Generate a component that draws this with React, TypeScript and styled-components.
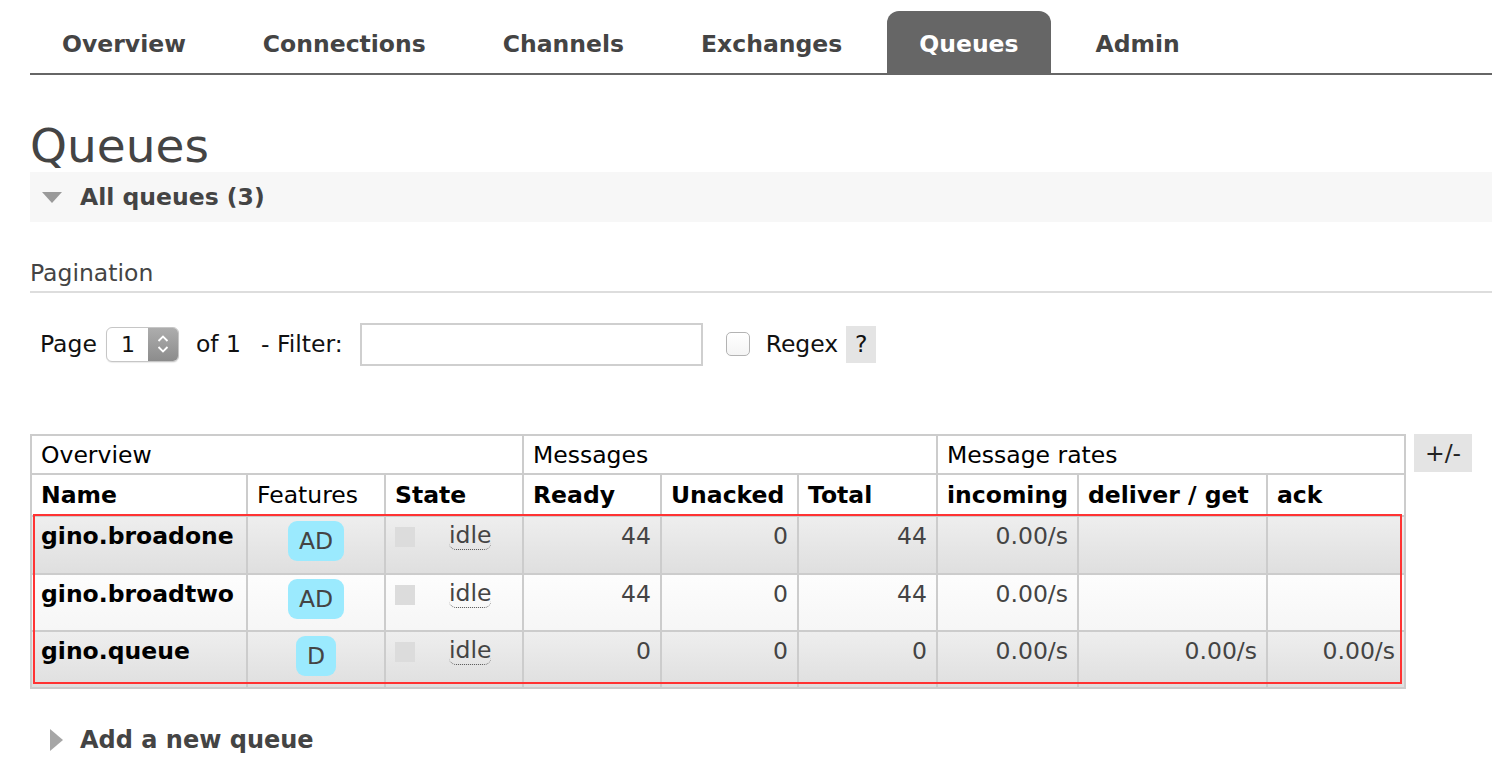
import React from 'react';
import styled, { createGlobalStyle } from 'styled-components';

const GlobalStyle = createGlobalStyle`
  html, body { margin: 0; padding: 0; background: #fff; }
  body {
    font-family: "DejaVu Sans", Verdana, sans-serif;
    font-size: 23.5px;
    color: #000;
    overflow: hidden;
  }
  * { box-sizing: border-box; }
`;

const Page = styled.div`
  padding-left: 30px;
  width: 1492px;
`;

const Nav = styled.nav`
  display: flex;
  align-items: flex-end;
  gap: 13px;
  height: 75px;
  border-bottom: 2px solid #666;
`;

const Tab = styled.a<{ $active?: boolean }>`
  display: flex;
  align-items: center;
  height: 62px;
  padding: 4px 32px 0;
  font-weight: bold;
  font-size: 23.5px;
  color: ${(p) => (p.$active ? '#fff' : '#444')};
  background: ${(p) => (p.$active ? '#666' : 'transparent')};
  border-radius: 12px 12px 0 0;
  text-decoration: none;
  white-space: nowrap;
`;

const Title = styled.h1`
  margin: 45px 0 0;
  font-size: 47px;
  font-weight: normal;
  line-height: 52px;
  color: #444;
`;

const SectionBar = styled.div`
  display: flex;
  align-items: center;
  gap: 18px;
  height: 50px;
  background: #f7f7f7;
  padding-left: 12px;
  font-weight: bold;
  color: #444;
`;

const SubHeading = styled.h3`
  margin: 36px 0 0;
  font-size: 23.5px;
  font-weight: normal;
  color: #444;
  line-height: 30px;
  padding-bottom: 3px;
  border-bottom: 2px solid #ddd;
`;

const PagingRow = styled.div`
  display: flex;
  align-items: center;
  height: 44px;
  margin-top: 29px;
  padding-left: 10px;
  color: #111;
`;

const Label = styled.span<{ $ml?: number }>`
  margin-left: ${(p) => p.$ml ?? 0}px;
  white-space: nowrap;
`;

const Select = styled.div`
  display: flex;
  margin-left: 9px;
  width: 73px;
  height: 35px;
  border: 1px solid #c6c6c6;
  border-radius: 6px;
  background: #fff;
  box-shadow: 0 1px 1px rgba(0, 0, 0, 0.08);
  overflow: hidden;
`;

const SelectValue = styled.div`
  flex: 1;
  display: flex;
  align-items: center;
  padding-left: 14px;
  font-size: 22px;
`;

const Stepper = styled.div`
  width: 30px;
  display: flex;
  align-items: center;
  justify-content: center;
  background: linear-gradient(#adadad, #8c8c8c);
`;

const FilterInput = styled.input`
  margin-left: 17px;
  width: 343px;
  height: 43px;
  border: 2px solid #cfcfcf;
  background: #fff;
  outline: none;
  font: inherit;
`;

const Checkbox = styled.span`
  margin-left: 23px;
  width: 24px;
  height: 24px;
  border: 1.5px solid #b3b3b3;
  border-radius: 5px;
  background: linear-gradient(#fff, #f4f4f4);
`;

const HelpBox = styled.span`
  margin-left: 8px;
  width: 30px;
  height: 37px;
  display: flex;
  align-items: center;
  justify-content: center;
  background: #e4e4e4;
`;

const TableArea = styled.div`
  position: relative;
  display: flex;
  align-items: flex-start;
  gap: 8px;
  margin-top: 68px;
`;

const Table = styled.table`
  border-collapse: collapse;
  table-layout: fixed;
  width: 1376px;
  border: 2px solid #ccc;
`;

const Col = styled.col<{ $w: number }>`
  width: ${(p) => p.$w}px;
`;

const GroupRow = styled.tr`
  height: 39px;
`;

const SubRow = styled.tr`
  height: 42px;
`;

const DataRow = styled.tr<{ $h: number }>`
  height: ${(p) => p.$h}px;
`;

const Th = styled.th<{ $bold?: boolean }>`
  border: 2px solid #ccc;
  padding: 0 9px;
  text-align: left;
  vertical-align: middle;
  font-weight: ${(p) => (p.$bold ? 'bold' : 'normal')};
  white-space: nowrap;
  background: #fff;
  color: #000;
`;

const Td = styled.td<{ $alt: boolean; $align?: 'left' | 'center' | 'right' }>`
  border: 2px solid #ccc;
  padding: 4px 9px 0 9px;
  vertical-align: top;
  line-height: 30px;
  text-align: ${(p) => p.$align ?? 'left'};
  color: #444;
  white-space: nowrap;
  background: ${(p) =>
    p.$alt
      ? 'linear-gradient(#fdfdfd, #f6f6f6)'
      : 'linear-gradient(#eeeeee, #dfdfdf)'};
`;

const NameTd = styled(Td)`
  font-weight: bold;
  color: #000;
`;

const Badge = styled.span`
  display: inline-block;
  height: 40px;
  line-height: 40px;
  padding: 0 11px;
  border-radius: 9px;
  background: #9beafe;
  color: #444;
`;

const StateCell = styled.div`
  display: flex;
  align-items: flex-start;
`;

const StateBox = styled.span`
  width: 20px;
  height: 20px;
  margin-top: 6px;
  background: #dcdcdc;
`;

const StateText = styled.abbr`
  margin-left: 34px;
  text-decoration: none;
  line-height: 28px;
  border-bottom: 1.5px dotted #555;
  border-radius: 0 0 7px 7px;
  color: #444;
`;

const HighlightBox = styled.div`
  position: absolute;
  left: 3px;
  top: 80px;
  width: 1369px;
  height: 170px;
  border: 2px solid #f33;
  pointer-events: none;
`;

const ToggleButton = styled.span`
  width: 58px;
  height: 38px;
  display: flex;
  align-items: center;
  justify-content: center;
  background: #e4e4e4;
  color: #222;
`;

const AddSection = styled.div`
  display: flex;
  align-items: center;
  gap: 17px;
  height: 30px;
  margin-top: 36px;
  padding-left: 20px;
  font-weight: bold;
  font-size: 24px;
  color: #444;
`;

const DownTriangle = () => (
  <svg width="20" height="11" viewBox="0 0 20 11">
    <polygon points="0,0 20,0 10,11" fill="#9a9a9a" />
  </svg>
);

const RightTriangle = () => (
  <svg width="13" height="22" viewBox="0 0 13 22">
    <polygon points="0,0 13,11 0,22" fill="#a6a6a6" />
  </svg>
);

const Chevrons = () => (
  <svg width="14" height="22" viewBox="0 0 14 22">
    <polyline points="2.5,8 7,3.5 11.5,8" fill="none" stroke="#fff" strokeWidth="1.8" />
    <polyline points="2.5,14 7,18.5 11.5,14" fill="none" stroke="#fff" strokeWidth="1.8" />
  </svg>
);

type Queue = {
  name: string;
  features: string;
  ready: string;
  unacked: string;
  total: string;
  incoming: string;
  deliver: string;
  ack: string;
  h: number;
};

const queues: Queue[] = [
  { name: 'gino.broadone', features: 'AD', ready: '44', unacked: '0', total: '44', incoming: '0.00/s', deliver: '', ack: '', h: 58 },
  { name: 'gino.broadtwo', features: 'AD', ready: '44', unacked: '0', total: '44', incoming: '0.00/s', deliver: '', ack: '', h: 57 },
  { name: 'gino.queue', features: 'D', ready: '0', unacked: '0', total: '0', incoming: '0.00/s', deliver: '0.00/s', ack: '0.00/s', h: 57 },
];

const colWidths = [216, 138, 138, 138, 137, 139, 141, 189, 138];

const tabs = ['Overview', 'Connections', 'Channels', 'Exchanges', 'Queues', 'Admin'];

export default function App() {
  return (
    <Page>
      <GlobalStyle />
      <Nav>
        {tabs.map((t) => (
          <Tab key={t} $active={t === 'Queues'}>
            {t}
          </Tab>
        ))}
      </Nav>

      <Title>Queues</Title>
      <SectionBar>
        <DownTriangle />
        <span>All queues (3)</span>
      </SectionBar>

      <SubHeading>Pagination</SubHeading>
      <PagingRow>
        <Label>Page</Label>
        <Select>
          <SelectValue>1</SelectValue>
          <Stepper>
            <Chevrons />
          </Stepper>
        </Select>
        <Label $ml={17}>of 1</Label>
        <Label $ml={20}>- Filter:</Label>
        <FilterInput type="text" />
        <Checkbox />
        <Label $ml={16}>Regex</Label>
        <HelpBox>?</HelpBox>
      </PagingRow>

      <TableArea>
        <Table>
          <colgroup>
            {colWidths.map((w, i) => (
              <Col key={i} $w={w} />
            ))}
          </colgroup>
          <thead>
            <GroupRow>
              <Th colSpan={3}>Overview</Th>
              <Th colSpan={3}>Messages</Th>
              <Th colSpan={3}>Message rates</Th>
            </GroupRow>
            <SubRow>
              <Th $bold>Name</Th>
              <Th>Features</Th>
              <Th $bold>State</Th>
              <Th $bold>Ready</Th>
              <Th $bold>Unacked</Th>
              <Th $bold>Total</Th>
              <Th $bold>incoming</Th>
              <Th $bold>deliver / get</Th>
              <Th $bold>ack</Th>
            </SubRow>
          </thead>
          <tbody>
            {queues.map((q, i) => {
              const alt = i % 2 === 1;
              return (
                <DataRow key={q.name} $h={q.h}>
                  <NameTd $alt={alt}>{q.name}</NameTd>
                  <Td $alt={alt} $align="center">
                    <Badge>{q.features}</Badge>
                  </Td>
                  <Td $alt={alt}>
                    <StateCell>
                      <StateBox />
                      <StateText title="idle">idle</StateText>
                    </StateCell>
                  </Td>
                  <Td $alt={alt} $align="right">{q.ready}</Td>
                  <Td $alt={alt} $align="right">{q.unacked}</Td>
                  <Td $alt={alt} $align="right">{q.total}</Td>
                  <Td $alt={alt} $align="right">{q.incoming}</Td>
                  <Td $alt={alt} $align="right">{q.deliver}</Td>
                  <Td $alt={alt} $align="right">{q.ack}</Td>
                </DataRow>
              );
            })}
          </tbody>
        </Table>
        <ToggleButton>+/-</ToggleButton>
        <HighlightBox />
      </TableArea>

      <AddSection>
        <RightTriangle />
        <span>Add a new queue</span>
      </AddSection>
    </Page>
  );
}
